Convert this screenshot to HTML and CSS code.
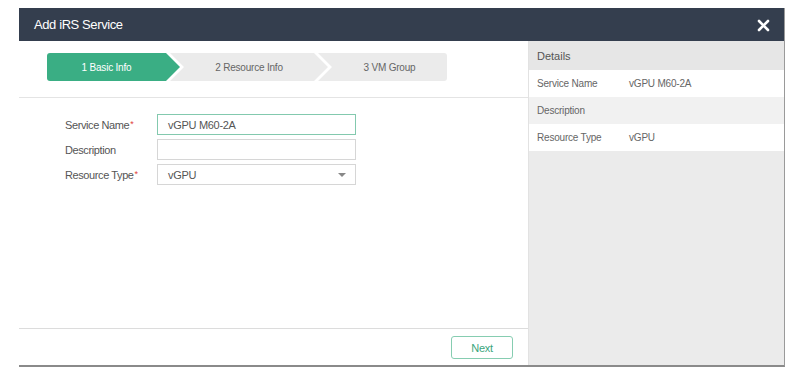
FILE: index.html
```html
<!DOCTYPE html>
<html>
<head>
<meta charset="utf-8">
<link rel="stylesheet" href="styles.css">
</head>
<body>
<div class="bg-row"></div>
<div class="dialog">
  <div class="dialog-header">
    <span class="dialog-title">Add iRS Service</span>
    <svg class="close" width="13" height="13" viewBox="0 0 13 13"><path d="M2 2 L11 11 M11 2 L2 11" stroke="#fff" stroke-width="2.6" stroke-linecap="round"/></svg>
  </div>
  <div class="dialog-body">
    <div class="main">
      <div class="steps-area">
        <div class="steps">
          <div class="step step-first active">1 Basic Info</div>
          <div class="step step-mid">2 Resource Info</div>
          <div class="step step-last">3 VM Group</div>
        </div>
      </div>
      <div class="form">
        <div class="form-row">
          <label class="form-label">Service Name<span class="req">*</span></label>
          <div class="input focused">vGPU M60-2A</div>
        </div>
        <div class="form-row">
          <label class="form-label">Description</label>
          <div class="input"></div>
        </div>
        <div class="form-row">
          <label class="form-label">Resource Type<span class="req">*</span></label>
          <div class="input select">vGPU<span class="caret"></span></div>
        </div>
      </div>
      <div class="footer">
        <button class="btn-next">Next</button>
      </div>
    </div>
    <div class="details">
      <div class="details-head">Details</div>
      <div class="details-row"><span class="d-label">Service Name</span><span class="d-value">vGPU M60-2A</span></div>
      <div class="details-row alt"><span class="d-label">Description</span><span class="d-value"></span></div>
      <div class="details-row"><span class="d-label">Resource Type</span><span class="d-value">vGPU</span></div>
    </div>
  </div>
</div>
</body>
</html>
```

FILE: styles.css
```css
* { box-sizing: border-box; }
html, body { margin: 0; padding: 0; background: #fff; }
body {
  font-family: "Liberation Sans", Arial, sans-serif;
  color: #555;
  width: 798px;
  height: 378px;
  overflow: hidden;
}
.bg-row {
  height: 8px;
}

.dialog {
  margin-left: 19px;
  width: 766px;
  height: 359px;
  display: flex;
  flex-direction: column;
  border-right: 1px solid #9a9a9a;
  border-bottom: 2px solid #8a8a8a;
}
.dialog-header {
  height: 33px;
  background: #343e4e;
  display: flex;
  align-items: center;
  justify-content: space-between;
  padding: 0 14px 0 15px;
}
.dialog-title {
  color: #fff;
  font-size: 13px;
  letter-spacing: -0.4px;
  margin-top: -1px;
}
.close { display: block; margin-top: 1px; }

.dialog-body {
  flex: 1;
  display: flex;
}
.main {
  width: 510px;
  display: flex;
  flex-direction: column;
  border-right: 1px solid #e2e2e2;
}
.steps-area {
  padding: 12px 0 16px 28px;
  border-bottom: 1px solid #e4e4e4;
}
.steps {
  display: flex;
  height: 28px;
}
.step {
  height: 28px;
  display: flex;
  align-items: center;
  justify-content: center;
  font-size: 10px;
  letter-spacing: -0.2px;
  color: #666;
  background: #ebebeb;
}
.step.active { background: #3aae84; color: #fff; }
.step-first {
  width: 133px;
  padding-right: 14px;
  border-radius: 3px 0 0 3px;
  clip-path: polygon(0 0, calc(100% - 14px) 0, 100% 50%, calc(100% - 14px) 100%, 0 100%);
}
.step-mid {
  width: 158px;
  margin-left: -10px;
  padding: 0 14px;
  clip-path: polygon(0 0, calc(100% - 14px) 0, 100% 50%, calc(100% - 14px) 100%, 0 100%, 14px 50%);
}
.step-last {
  width: 129px;
  margin-left: -10px;
  padding-left: 14px;
  border-radius: 0 3px 3px 0;
  clip-path: polygon(0 0, 100% 0, 100% 100%, 0 100%, 14px 50%);
}

.form {
  flex: 1;
  padding: 16px 0 0 46px;
  display: flex;
  flex-direction: column;
  gap: 4px;
}
.form-row {
  display: flex;
  align-items: center;
  height: 21px;
}
.form-label {
  width: 92px;
  font-size: 11px;
  letter-spacing: -0.4px;
  color: #555;
}
.req { color: #e0403a; font-size: 9px; vertical-align: 2px; margin-left: 1px; }
.input {
  width: 199px;
  height: 21px;
  border: 1px solid #d6d6d6;
  font-size: 11px;
  letter-spacing: -0.3px;
  color: #555;
  padding-left: 10px;
  display: flex;
  align-items: center;
  position: relative;
}
.input.focused { border-color: #83c9ae; }
.caret {
  position: absolute;
  right: 9px;
  top: 8px;
  width: 0;
  height: 0;
  border-left: 4px solid transparent;
  border-right: 4px solid transparent;
  border-top: 4px solid #888;
}

.footer {
  height: 37px;
  border-top: 1px solid #dcdcdc;
  display: flex;
  justify-content: flex-end;
  align-items: flex-start;
  padding: 7px 15px 0 0;
}
.btn-next {
  width: 62px;
  height: 23px;
  background: #fff;
  border: 1px solid #86cdb1;
  border-radius: 3px;
  color: #3aa57c;
  font-family: "Liberation Sans", Arial, sans-serif;
  font-size: 11px;
  letter-spacing: -0.3px;
  padding: 0;
}

.details {
  flex: 1;
  background: #ebebeb;
  display: flex;
  flex-direction: column;
}
.details-head {
  height: 29px;
  background: #e6e6e6;
  font-size: 11px;
  color: #555;
  display: flex;
  align-items: center;
  padding-left: 8px;
}
.details-row {
  height: 27px;
  display: flex;
  align-items: center;
  padding-left: 8px;
  background: #fff;
  font-size: 10px;
  letter-spacing: -0.2px;
  color: #666;
}
.details-row.alt { background: #f1f1f1; }
.d-label { width: 92px; }
.d-value { color: #666; }
```
